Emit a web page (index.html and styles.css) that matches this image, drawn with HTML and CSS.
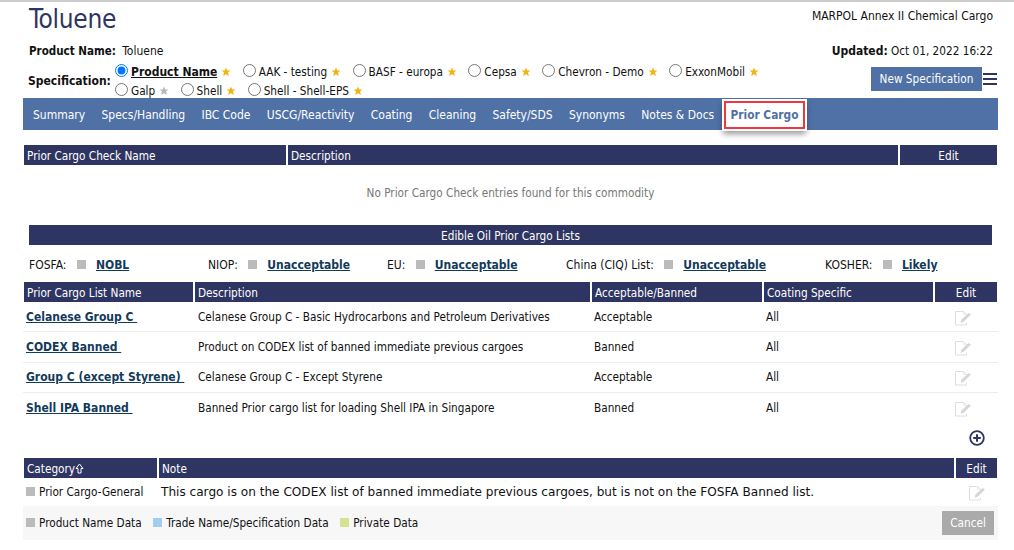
FILE: index.html
```html
<!DOCTYPE html>
<html lang="en">
<head>
<meta charset="utf-8">
<title>Toluene</title>
<link rel="stylesheet" href="styles.css">
</head>
<body>
<svg class="defs" width="0" height="0" aria-hidden="true">
  <symbol id="edit" viewBox="0 0 18 16">
    <path d="M12.500 8v-3.500l-3-3h-8v13.500h11v-2.500" fill="none" stroke="#dedede"/>
    <path d="M9.500 1.500v3h3" fill="none" stroke="#ececec"/>
    <path d="M6.500 13l1-3.500 7-6.500 2.500 1.500-7 7z" fill="#d6d6d6"/>
  </symbol>
  <symbol id="star" viewBox="0 0 10 10">
    <path d="M5 .5l1.300 3h3.200L7 5.600l.9 3.400L5 7.200 2.100 9 3 5.600.5 3.500h3.200z"/>
  </symbol>
</svg>
<main class="page">
  <header class="head">
    <h1 class="title">Toluene</h1>
    <div class="annex">MARPOL Annex II Chemical Cargo</div>
  </header>
  <div class="meta">
    <div class="meta-name"><b>Product Name:</b> Toluene</div>
    <div class="meta-date"><b>Updated:</b> Oct 01, 2022 16:22</div>
  </div>
  <div class="spec">
    <div class="spec-label">Specification:</div>
    <div class="spec-options">
      <label class="opt"><input type="radio" name="s" checked><b class="sel">Product Name</b><svg class="star"><use href="#star"/></svg></label>
      <label class="opt"><input type="radio" name="s">AAK - testing<svg class="star"><use href="#star"/></svg></label>
      <label class="opt"><input type="radio" name="s">BASF - europa<svg class="star"><use href="#star"/></svg></label>
      <label class="opt"><input type="radio" name="s">Cepsa<svg class="star"><use href="#star"/></svg></label>
      <label class="opt"><input type="radio" name="s">Chevron - Demo<svg class="star"><use href="#star"/></svg></label>
      <label class="opt"><input type="radio" name="s">ExxonMobil<svg class="star"><use href="#star"/></svg></label>
      <label class="opt"><input type="radio" name="s">Galp<svg class="star grey"><use href="#star"/></svg></label>
      <label class="opt"><input type="radio" name="s">Shell<svg class="star"><use href="#star"/></svg></label>
      <label class="opt"><input type="radio" name="s">Shell - Shell-EPS<svg class="star"><use href="#star"/></svg></label>
    </div>
    <button class="btn-new">New Specification</button>
    <div class="burger"><i></i><i></i><i></i></div>
  </div>
  <nav class="nav">
    <a>Summary</a><a>Specs/Handling</a><a>IBC Code</a><a>USCG/Reactivity</a><a>Coating</a><a>Cleaning</a><a>Safety/SDS</a><a>Synonyms</a><a>Notes &amp; Docs</a><a class="active">Prior Cargo</a>
  </nav>

  <div class="grid g1">
    <div class="th">Prior Cargo Check Name</div><div class="th">Description</div><div class="th c">Edit</div>
  </div>
  <div class="empty">No Prior Cargo Check entries found for this commodity</div>

  <div class="band">Edible Oil Prior Cargo Lists</div>
  <div class="status">
    <div>FOSFA: <i class="sq"></i><a>NOBL</a></div>
    <div>NIOP: <i class="sq"></i><a>Unacceptable</a></div>
    <div>EU: <i class="sq"></i><a>Unacceptable</a></div>
    <div>China (CIQ) List: <i class="sq"></i><a>Unacceptable</a></div>
    <div>KOSHER: <i class="sq"></i><a>Likely</a></div>
  </div>

  <div class="grid g2">
    <div class="th">Prior Cargo List Name</div><div class="th">Description</div><div class="th">Acceptable/Banned</div><div class="th">Coating Specific</div><div class="th c">Edit</div>
  </div>
  <div class="grid g2 row">
    <a class="name">Celanese Group C </a><div class="d">Celanese Group C - Basic Hydrocarbons and Petroleum Derivatives</div><div class="d">Acceptable</div><div class="d">All</div><svg class="edit"><use href="#edit"/></svg>
  </div>
  <div class="grid g2 row">
    <a class="name">CODEX Banned </a><div class="d">Product on CODEX list of banned immediate previous cargoes</div><div class="d">Banned</div><div class="d">All</div><svg class="edit"><use href="#edit"/></svg>
  </div>
  <div class="grid g2 row">
    <a class="name">Group C (except Styrene) </a><div class="d">Celanese Group C - Except Styrene</div><div class="d">Acceptable</div><div class="d">All</div><svg class="edit"><use href="#edit"/></svg>
  </div>
  <div class="grid g2 row last">
    <a class="name">Shell IPA Banned </a><div class="d">Banned Prior cargo list for loading Shell IPA in Singapore</div><div class="d">Banned</div><div class="d">All</div><svg class="edit"><use href="#edit"/></svg>
  </div>
  <div class="add">
    <svg width="16" height="16" viewBox="0 0 16 16"><circle cx="8" cy="8" r="6.800" fill="none" stroke="#2e3562" stroke-width="1.800"/><path d="M8 4.200v7.600M4.200 8h7.600" stroke="#2e3562" stroke-width="2"/></svg>
  </div>

  <div class="grid g3">
    <div class="th">Category<svg class="sort" viewBox="0 0 9 11"><path d="M4.500 1L8 5.500H6v4.500H3V5.500H1z" fill="none" stroke="#fff"/></svg></div><div class="th">Note</div><div class="th c">Edit</div>
  </div>
  <div class="grid g3 noterow">
    <div class="cat"><i class="key"></i>Prior Cargo-General</div>
    <div class="note">This cargo is on the CODEX list of banned immediate previous cargoes, but is not on the FOSFA Banned list.</div>
    <svg class="edit"><use href="#edit"/></svg>
  </div>
  <footer class="foot">
    <span class="leg"><i class="key"></i>Product Name Data</span>
    <span class="leg"><i class="key blue"></i>Trade Name/Specification Data</span>
    <span class="leg"><i class="key green"></i>Private Data</span>
    <button class="cancel">Cancel</button>
  </footer>
</main>
</body>
</html>
```
FILE: styles.css
```css
* { box-sizing: border-box; }
html, body { margin: 0; padding: 0; }
body {
  border-top: 2px solid #ccc;
  font: 11.700px/16px "DejaVu Sans Condensed", "DejaVu Sans", sans-serif;
  color: #111;
  background: #fff;
}
.defs { position: absolute; }
.page { width: 975px; margin-left: 23px; }
.head { display: flex; justify-content: space-between; height: 32px; padding: 0 5px 0 6px; }
.title { margin: 0; font-size: 26px; line-height: 34px; font-weight: 400; color: #2e3562; letter-spacing: -.3px; }
.annex { padding-top: 6px; font-size: 12px; }
.meta { display: flex; justify-content: space-between; padding: 9px 5px 0 6px; height: 30px; }
.meta-name { font-size: 12px; }
.meta-name b { font-size: 11.500px; margin-right: 3px; }
.meta-date b { font-size: 12px; }
.spec { display: flex; align-items: center; height: 34px; padding-left: 5px; }
.spec-label { width: 87px; font-size: 12px; font-weight: 700; }
.spec-options { flex: 0 0 679px; display: flex; flex-wrap: wrap; column-gap: 11.400px; row-gap: 1px; margin-right: auto; }
.opt { display: flex; align-items: center; height: 18px; }
.opt input { margin: 0 3px 3px 0; width: 13px; height: 13px; }
.sel { font-size: 12px; text-decoration: underline; }
.star { width: 10px; height: 10px; margin-left: 4px; fill: #f0b414; }
.star.grey { fill: #b8b8b8; }
.btn-new {
  width: 111px; height: 24px; margin: 0 1px 4px 0; border: 0; padding: 0;
  background: #4f71a5; color: #fff; font: inherit;
}
.burger { width: 14px; margin: 0 1px 4px 0; display: flex; flex-direction: column; gap: 3px; }
.burger i { height: 2px; background: #2e3562; }
.nav {
  display: flex; align-items: center; gap: 16.300px; height: 32px;
  padding: 2px 0 0 10px; background: #4f71a5; font-size: 12px;
}
.nav a { color: #fff; }
.nav .active {
  margin: 0 0 1px -7px; padding: 0 5px; height: 28px; line-height: 24px;
  border: 2px solid #f0383c; background: #fff; color: #4f71a5; font-weight: 700; font-size: 11.800px;
  box-shadow: 0 0 0 2px #fff, 0 4px 6px 1px rgba(0,0,0,.4);
  position: relative;
}
.grid { display: grid; column-gap: 2px; margin-left: 1px; width: 973px; }
.g1 { grid-template-columns: 262px 610px 97px; margin-top: 15px; }
.g2 { grid-template-columns: 169px 395px 170px 169px 62px; }
.g3 { grid-template-columns: 133px 795px 41px; }
.th {
  height: 20px; line-height: 22px; padding-left: 3px; background: #2e3562; color: #fff;
}
.th.c { padding-left: 0; text-align: center; }
.sort { width: 9px; height: 11px; margin-left: 0; vertical-align: -1px; }
.empty { height: 60px; line-height: 57px; text-align: center; color: #777; }
.band {
  margin-left: 6px; width: 963px; height: 20px; line-height: 22px;
  background: #2e3562; color: #fff; text-align: center;
}
.status {
  display: grid; grid-template-columns: 179px 179px 179px 259px auto;
  margin-left: 6px; height: 37px; align-items: center; padding-top: 3px; font-size: 12px;
}
.sq { display: inline-block; width: 9px; height: 9px; margin: 0 6px 0 7px; background: #bbb; }
.status a, .name { color: #123a5a; font-weight: 700; text-decoration: underline; font-size: 12px; }
.status a { margin-left: 4px; }
.row {
  align-items: center; height: 30.300px; margin-left: 0; width: 975px;
  padding-left: 3px; border-bottom: 1px solid #eee;
  grid-template-columns: 168px 394px 170px 169px 56px;
}
.row.last { border-bottom: 0; }
.name { white-space: pre; }
.d { padding-left: 2px; }
.edit { width: 18px; height: 16px; justify-self: center; margin-top: 2px; }
.add { display: flex; justify-content: flex-end; padding: 7px 13px 0 0; height: 35px; }
.noterow { height: 28px; align-items: center; margin-left: 0; width: 975px; padding-left: 3px; grid-template-columns: 132px 795px 39px; }
.key { display: inline-block; width: 9px; height: 9px; margin-right: 4px; background: #bbb; }
.key.blue { background: #a3cdee; }
.key.green { background: #d5e38f; }
.note { padding-left: 1px; font-family: "DejaVu Sans", sans-serif; font-size: 12.100px; }
.foot {
  display: flex; align-items: center; height: 34px; padding: 0 4px 0 3px; gap: 11.500px;
  background: #f7f7f7;
}
.cancel {
  margin-left: auto; width: 52px; height: 24px; border: 0; padding: 0;
  background: #aaa; color: #fff; font: inherit;
}
```
